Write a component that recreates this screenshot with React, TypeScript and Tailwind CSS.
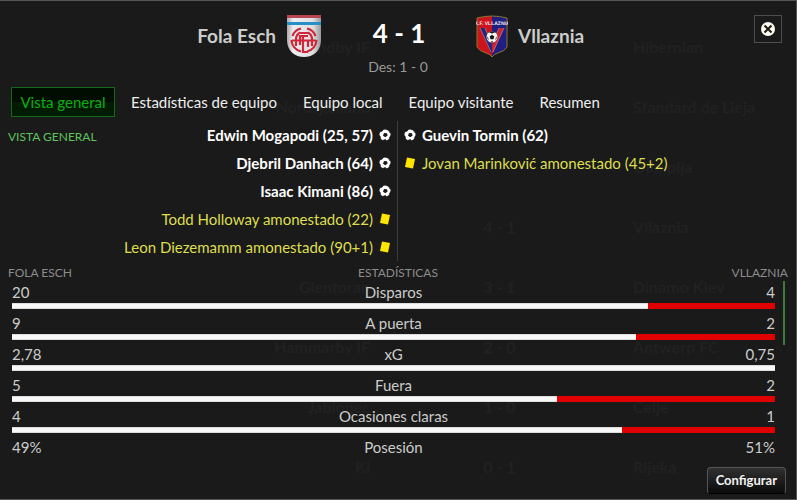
import clsx from "clsx";

const tabs = ["Vista general", "Estadísticas de equipo", "Equipo local", "Equipo visitante", "Resumen"];

const homeEvents = [
  { type: "goal", text: "Edwin Mogapodi (25, 57)" },
  { type: "goal", text: "Djebril Danhach (64)" },
  { type: "goal", text: "Isaac Kimani (86)" },
  { type: "card", text: "Todd Holloway amonestado (22)" },
  { type: "card", text: "Leon Diezemamm amonestado (90+1)" },
];

const awayEvents = [
  { type: "goal", text: "Guevin Tormin (62)" },
  { type: "card", text: "Jovan Marinković amonestado (45+2)" },
];

const stats = [
  { label: "Disparos", home: "20", away: "4", share: 83.3 },
  { label: "A puerta", home: "9", away: "2", share: 81.8 },
  { label: "xG", home: "2,78", away: "0,75", share: 100 },
  { label: "Fuera", home: "5", away: "2", share: 71.4 },
  { label: "Ocasiones claras", home: "4", away: "1", share: 80 },
  { label: "Posesión", home: "49%", away: "51%" },
];

// Fixture list that shows faintly through the dialog
const fixtures = [
  { home: "Brøndby IF", score: "", away: "Hibernian" },
  { home: "Nordsjælland", score: "", away: "Standard de Lieja" },
  { home: "", score: "", away: "Olimpija" },
  { home: "", score: "4 - 1", away: "Vllaznia" },
  { home: "Glentoran", score: "3 - 1", away: "Dinamo Kiev" },
  { home: "Hammarby IF", score: "2 - 0", away: "Antwerp FC" },
  { home: "Jablonec", score: "1 - 0", away: "Celje" },
  { home: "Ki", score: "0 - 1", away: "Rijeka" },
];

function FolaCrest() {
  return (
    <svg viewBox="0 0 36 44" className="h-11 w-9 shrink-0" aria-hidden="true">
      <defs>
        <linearGradient id="fola" x1="0" x2="1">
          <stop offset="0" stopColor="#a0a0a4" />
          <stop offset="0.2" stopColor="#eeeef0" />
          <stop offset="0.75" stopColor="#dedee0" />
          <stop offset="1" stopColor="#909094" />
        </linearGradient>
        <clipPath id="folaShield">
          <path d="M1 1H35V26C35 37 27 43 18 43S1 37 1 26Z" />
        </clipPath>
      </defs>
      <g clipPath="url(#folaShield)">
        <rect width="36" height="44" fill="url(#fola)" />
        <rect width="36" height="4" fill="#b84452" />
        <rect y="8" width="36" height="3" fill="#2791c7" />
      </g>
      <g fill="none" stroke="#cf2638" strokeWidth="2.2">
        <path d="M15 14.500A12 12 0 0 0 6.500 22M5.500 26A12 12 0 0 0 15 37.500M21 14.500A12 12 0 0 1 29.500 22M30.500 26A12 12 0 0 1 21 37.500" />
        <path d="M14 18.500A8 8 0 0 0 10 25V32M22 18.500A8 8 0 0 1 26 25V32M6 26.500H30" />
        <path d="M14 19H22M22 22H14V31M17 23V38H22M22 26V33" />
      </g>
    </svg>
  );
}

function VllazniaCrest() {
  return (
    <svg viewBox="0 0 32 43" className="h-[43px] w-8 shrink-0" aria-hidden="true">
      <defs>
        <clipPath id="vllShield">
          <path d="M1 3Q16-1 31 3V32Q29 36 22 38Q18 39 16 42Q14 39 10 38Q3 36 1 32Z" />
        </clipPath>
      </defs>
      <g clipPath="url(#vllShield)">
        <rect width="16" height="43" fill="#cc141d" />
        <rect x="16" width="16" height="43" fill="#1e1f80" />
        <path d="M4 13H9L16 30V38H15Z" fill="#25277f" />
        <path d="M23 13H28L17 38H16V30Z" fill="#cc2330" />
        <path d="M4 13L15 37M28 13L17 37M9 13L12 20M23 13L20 20" stroke="#c98f99" strokeWidth="0.6" />
      </g>
      <path d="M1 3Q16-1 31 3V32Q29 36 22 38Q18 39 16 42Q14 39 10 38Q3 36 1 32Z" fill="none" stroke="#8d742f" />
      <text
        x="16"
        y="10"
        textAnchor="middle"
        fontSize="5"
        fontWeight="bold"
        fill="#f1e9ea"
        fontFamily="Liberation Sans Narrow, Liberation Sans, sans-serif"
        textRendering="geometricPrecision"
      >
        K.F. VLLAZNIA
      </text>
      <circle cx="16" cy="22" r="5.500" fill="#f3f3f3" />
      <path
        d="M16 19.800L18.300 21.500L17.400 24.200H14.600L13.700 21.500ZM13 17.300L15 16.600H17L19 17.300L16 18.400ZM10.700 21.500L12.300 23L12.500 25.500ZM21.300 21.500L19.700 23L19.500 25.500ZM14.500 27.300L16 26L17.500 27.300Z"
        fill="#151515"
      />
    </svg>
  );
}

function BallIcon() {
  return (
    <svg viewBox="0 0 12 12" className="h-3 w-3 shrink-0" aria-hidden="true">
      <circle cx="6" cy="6" r="5.600" fill="#fff" />
      <path
        d="M5 4L8 4.200L8.600 6.500L6.300 8.300L4 6.800ZM1 1.500L4.500 0.200L3.800 1.800L1.800 3.300ZM8.600 0.500L11.800 4L10.300 3.400ZM0 6L1.600 7.600L1.800 9.600L0 9.500ZM4.600 10.400L6.800 10.200L7.500 12H4ZM12 6L10.800 7.600L9.800 9.600L12 9Z"
        fill="#1a1a1a"
      />
    </svg>
  );
}

function CardIcon() {
  return (
    <svg viewBox="0 0 12 12" className="h-3 w-3 shrink-0" aria-hidden="true">
      <path d="M3 0.500L11 2L9 11.500L1 10Z" fill="#ffe600" />
    </svg>
  );
}

function EventRow({ type, text, away }: { type: string; text: string; away?: boolean }) {
  return (
    <li className={clsx("flex h-7 items-center gap-1.5", !away && "flex-row-reverse")}>
      {type === "goal" ? <BallIcon /> : <CardIcon />}
      <span className={type === "goal" ? "font-bold text-white" : "text-[#dede4e]"}>{text}</span>
    </li>
  );
}

function Backdrop() {
  return (
    <div
      className="pointer-events-none absolute inset-0 pt-4 text-base font-bold text-[#202121]"
      aria-hidden="true"
    >
      {fixtures.map((f) => (
        <div key={f.away} className="grid h-[60px] grid-cols-[370px_263px_1fr] items-center">
          <span className="text-right">{f.home}</span>
          <span className="pr-1 text-center">{f.score}</span>
          <span>{f.away}</span>
        </div>
      ))}
    </div>
  );
}

export default function App() {
  return (
    <main className="relative flex min-h-screen flex-col border-y border-r border-[#555] bg-[#1a1a1a] font-[Lato,sans-serif] text-[15px] text-[#ccc]">
      <Backdrop />

      <header className="relative grid grid-cols-[1fr_152px_1fr] pt-2.5">
        <div className="flex h-[50px] items-center justify-end gap-2.5">
          <h2 className="text-[19px] font-bold">Fola Esch</h2>
          <FolaCrest />
        </div>
        <div className="text-center">
          <h1 className="pt-1 pl-0.5 text-[26px] leading-9 font-bold text-white">4 - 1</h1>
          <p className="pt-1.5 text-sm text-[#999]">Des: 1 - 0</p>
        </div>
        <div className="flex h-[50px] items-center gap-2.5 pl-0.5">
          <VllazniaCrest />
          <h2 className="text-[19px] font-bold">Vllaznia</h2>
        </div>
        <button
          aria-label="Cerrar"
          className="absolute top-3.5 right-3.5 flex h-7 w-7 items-center justify-center border border-[#4c4c4c] bg-[#1a1a1a]"
        >
          <svg viewBox="0 0 14 14" className="h-3.5 w-3.5" aria-hidden="true">
            <circle cx="7" cy="7" r="7" fill="#fffbef" />
            <path d="M3.500 3.500L10.500 10.500M10.500 3.500L3.500 10.500" stroke="#1a1a1a" strokeWidth="2" />
          </svg>
        </button>
      </header>

      <nav className="relative flex gap-[26px] px-[11px] pt-2.5">
        {tabs.map((tab, i) => (
          <button
            key={tab}
            className={clsx(
              "h-[30px] whitespace-nowrap",
              i === 0
                ? "-mr-2.5 w-[104px] border border-[#12691a] bg-linear-to-b from-[#020d02] from-50% to-[#021c03] to-50% text-[#0cae14]"
                : "text-[#eee]"
            )}
          >
            {tab}
          </button>
        ))}
      </nav>

      <section className="relative grid grid-cols-2 pt-1">
        <h3 className="absolute top-3 left-2 text-xs text-[#5fc25f]">VISTA GENERAL</h3>
        <ul className="border-r border-[#3c3c3c] pr-1.5">
          {homeEvents.map((e) => (
            <EventRow key={e.text} {...e} />
          ))}
        </ul>
        <ul className="pl-1.5">
          {awayEvents.map((e) => (
            <EventRow key={e.text} {...e} away />
          ))}
        </ul>
      </section>

      <div className="relative grid grid-cols-3 px-2 pt-1 text-xs leading-4 text-[#8c8c8c]">
        <span>FOLA ESCH</span>
        <span className="text-center">ESTADÍSTICAS</span>
        <span className="text-right">VLLAZNIA</span>
      </div>

      <section className="relative flex pr-[11px] pl-3">
        <dl className="flex-1">
          {stats.map((s) => (
            <div key={s.label} className="h-[31px]">
              <div className="grid grid-cols-3 leading-[22px]">
                <dd>{s.home}</dd>
                <dt className="text-center">{s.label}</dt>
                <dd className="text-right">{s.away}</dd>
              </div>
              {s.share !== undefined && (
                <div className="flex h-1.5 bg-[#e00000]">
                  <div className="border-y border-[#ddd] bg-[#f8f8f8]" style={{ width: `${s.share}%` }} />
                </div>
              )}
            </div>
          ))}
        </dl>
        <div className="ml-2 h-16 w-0.5 bg-[#3f7a3d]" />
      </section>

      <footer className="relative flex justify-end pr-2.5">
        <button className="h-[27px] rounded-sm border border-[#555] border-b-black bg-linear-to-b from-[#303030] to-[#0c0c0c] px-2 text-[13px] font-bold text-[#f2f2f2]">
          Configurar
        </button>
      </footer>
    </main>
  );
}
